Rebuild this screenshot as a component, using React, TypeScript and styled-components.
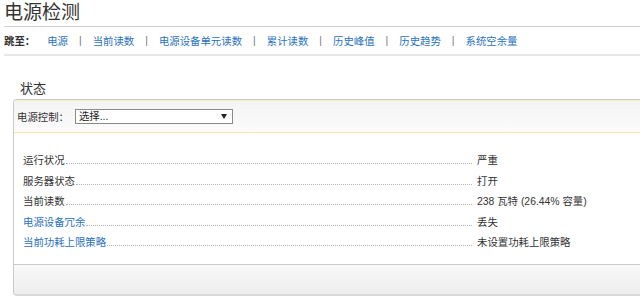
import React from 'react'
import styled, { createGlobalStyle } from 'styled-components'

const GlobalStyle = createGlobalStyle`
  html, body {
    margin: 0;
    padding: 0;
    background: #fff;
    overflow: hidden;
  }
  body {
    font-family: "Liberation Sans", "Noto Sans CJK SC", sans-serif;
    font-size: 10.4px;
    color: #333;
  }
`

const Page = styled.div`
  width: 720px;
  padding-left: 4px;
`

const Title = styled.h1`
  margin: 0;
  height: 26px;
  line-height: 26px;
  font-size: 19px;
  font-weight: normal;
  color: #333;
  border-bottom: 1px solid #cfcfcf;
`

const Nav = styled.div`
  display: flex;
  align-items: center;
  height: 27px;
  border-bottom: 2px solid #e6e6e6;
`

const NavLabel = styled.b`
  color: #333;
  margin-right: 12px;
`

const NavLink = styled.a`
  color: #2a72bf;
  text-decoration: none;
`

const Sep = styled.span`
  color: #777;
  padding: 0 11px;
`

const Section = styled.div`
  padding: 24px 0 0 9px;
`

const SectionTitle = styled.div`
  padding-left: 7px;
  height: 19px;
  line-height: 18px;
  font-size: 13px;
  color: #333;
`

const Box = styled.div`
  width: 700px;
  border: 1px solid #cacaca;
  border-bottom: 2px solid #d8d8d8;
  border-radius: 4px;
  overflow: hidden;
`

const Toolbar = styled.div`
  display: flex;
  align-items: center;
  height: 31px;
  padding-left: 3px;
  border-top: 1px solid #fbefbf;
  border-bottom: 1px solid #f6e8a8;
  background: linear-gradient(#f4f4f4, #fbfbfb);
`

const SelectWrap = styled.div`
  position: relative;
  margin-left: 6px;
`

const Select = styled.select`
  appearance: none;
  width: 158px;
  height: 15px;
  padding: 0 0 0 3px;
  border: 1px solid #8a8a8a;
  border-radius: 0;
  background: #fff;
  font-family: inherit;
  font-size: 10.4px;
  line-height: 13px;
  color: #222;
`

const Arrow = styled.span`
  position: absolute;
  right: 6px;
  top: 5px;
  width: 0;
  height: 0;
  border-left: 3px solid transparent;
  border-right: 3px solid transparent;
  border-top: 5px solid #222;
  pointer-events: none;
`

const Rows = styled.div`
  padding: 18px 0 10px 9px;
`

const Row = styled.div`
  display: flex;
  align-items: baseline;
  height: 20.5px;
  line-height: 20px;
`

const LabelCell = styled.div`
  display: flex;
  align-items: baseline;
  width: 454px;
  flex: none;
`

const Label = styled.span<{ $link?: boolean }>`
  color: ${ props => props.$link ? '#2a72bf' : '#333' };
  white-space: nowrap;
`

const Leader = styled.span`
  flex: 1;
  margin: 0 5px 0 1px;
  border-bottom: 1px dotted #b4b4b4;
`

const Value = styled.span`
  color: #333;
`

const Footer = styled.div`
  height: 29px;
  border-top: 1px solid #cacaca;
  background: linear-gradient(#f9f9f9, #ededed);
`

const links = ['电源', '当前读数', '电源设备单元读数', '累计读数', '历史峰值', '历史趋势', '系统空余量']

const rows = [
  { label: '运行状况', value: '严重' },
  { label: '服务器状态', value: '打开' },
  { label: '当前读数', value: '238 瓦特 (26.44% 容量)' },
  { label: '电源设备冗余', value: '丢失', link: true },
  { label: '当前功耗上限策略', value: '未设置功耗上限策略', link: true },
]

export default function App() {
  return (
    <Page>
      <GlobalStyle />
      <Title>电源检测</Title>
      <Nav>
        <NavLabel>跳至：</NavLabel>
        { links.map((l, i) =>
          <React.Fragment key={ l }>
            { i > 0 && <Sep>|</Sep> }
            <NavLink href="#">{ l }</NavLink>
          </React.Fragment>) }
      </Nav>
      <Section>
        <SectionTitle>状态</SectionTitle>
        <Box>
          <Toolbar>
            <span>电源控制：</span>
            <SelectWrap>
              <Select defaultValue="">
                <option value="">选择...</option>
              </Select>
              <Arrow />
            </SelectWrap>
          </Toolbar>
          <Rows>
            { rows.map(r =>
              <Row key={ r.label }>
                <LabelCell>
                  <Label $link={ r.link }>{ r.label }</Label>
                  <Leader />
                </LabelCell>
                <Value>{ r.value }</Value>
              </Row>) }
          </Rows>
          <Footer />
        </Box>
      </Section>
    </Page>
  )
}
